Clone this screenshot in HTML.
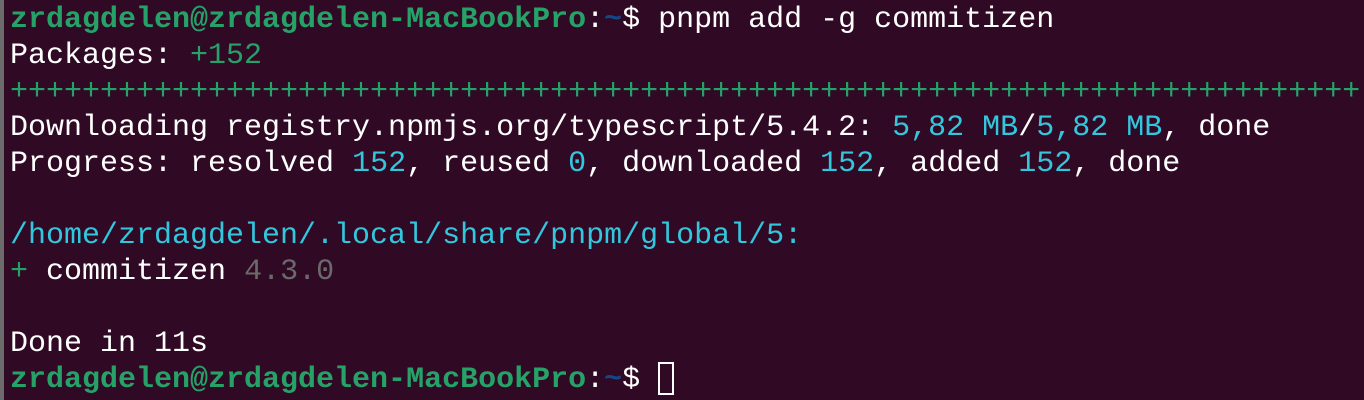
<!DOCTYPE html>
<html><head><style>
html,body{margin:0;padding:0;}
body{width:1364px;height:400px;background:#300a24;overflow:hidden;position:relative;}
.l{position:absolute;left:0;top:0;width:4px;height:400px;background:#6b6b6b;}
pre{position:absolute;left:10px;top:2px;margin:0;font-family:"Liberation Mono",monospace;font-size:30px;line-height:36px;color:#ffffff;white-space:pre;}
.g{color:#26a269;}
.gb{color:#26a269;font-weight:bold;}
.bl{color:#12488b;font-weight:bold;}
.c2{color:#33c7de;}
.gr{color:#6a6a6a;}
.cur{display:inline-block;width:16px;height:33px;border:2px solid #fff;vertical-align:-8px;box-sizing:border-box;}
</style></head><body>
<div class="l"></div>
<pre><span class="gb">zrdagdelen@zrdagdelen-MacBookPro</span>:<span class="bl">~</span>$ pnpm add -g commitizen
Packages: <span class="g">+152</span>
<span class="g">+++++++++++++++++++++++++++++++++++++++++++++++++++++++++++++++++++++++++++</span>
Downloading registry.npmjs.org/typescript/5.4.2: <span class="c2">5,82 MB</span>/<span class="c2">5,82 MB</span>, done
Progress: resolved <span class="c2">152</span>, reused <span class="c2">0</span>, downloaded <span class="c2">152</span>, added <span class="c2">152</span>, done

<span class="c2">/home/zrdagdelen/.local/share/pnpm/global/5:</span>
<span class="g">+</span> commitizen <span class="gr">4.3.0</span>

Done in 11s
<span class="gb">zrdagdelen@zrdagdelen-MacBookPro</span>:<span class="bl">~</span>$ <span class="cur"></span></pre>
</body></html>
